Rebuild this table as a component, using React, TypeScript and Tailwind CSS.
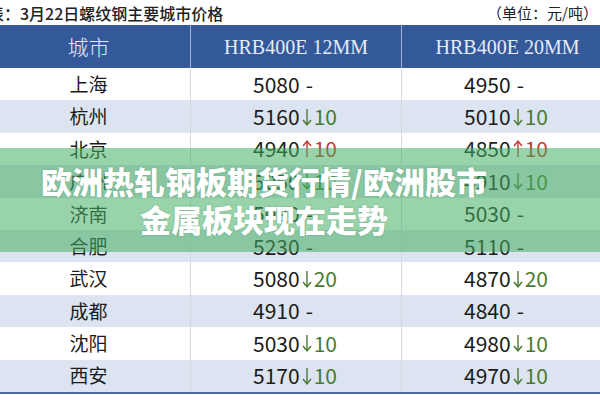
import React from "react";

type Chg = { dir: "up" | "down" | "none"; v?: string };
type Row = { city: string; a: string; ac: Chg; b: string; bc: Chg };

const rows: Row[] = [
  { city: "上海", a: "5080", ac: { dir: "none" }, b: "4950", bc: { dir: "none" } },
  { city: "杭州", a: "5160", ac: { dir: "down", v: "10" }, b: "5010", bc: { dir: "down", v: "10" } },
  { city: "北京", a: "4940", ac: { dir: "up", v: "10" }, b: "4850", bc: { dir: "up", v: "10" } },
  { city: "广州", a: "5050", ac: { dir: "down", v: "10" }, b: "4910", bc: { dir: "down", v: "10" } },
  { city: "济南", a: "5090", ac: { dir: "none" }, b: "5030", bc: { dir: "none" } },
  { city: "合肥", a: "5230", ac: { dir: "none" }, b: "5110", bc: { dir: "none" } },
  { city: "武汉", a: "5080", ac: { dir: "down", v: "20" }, b: "4870", bc: { dir: "down", v: "20" } },
  { city: "成都", a: "4910", ac: { dir: "none" }, b: "4840", bc: { dir: "none" } },
  { city: "沈阳", a: "5030", ac: { dir: "down", v: "10" }, b: "4980", bc: { dir: "down", v: "10" } },
  { city: "西安", a: "5170", ac: { dir: "down", v: "10" }, b: "4970", bc: { dir: "down", v: "10" } },
];

const cjk = { fontFamily: '"Noto Sans CJK SC", "Noto Sans", sans-serif' };
const serif = { fontFamily: '"Liberation Serif", "Noto Sans CJK SC", serif' };

function Arrow({ up, color }: { up: boolean; color: string }) {
  return (
    <svg width="10" height="18" viewBox="0 0 10 18" className="mx-[2px]" style={{ transform: up ? "rotate(180deg)" : undefined }}>
      <path d="M5 1 V16.5" stroke={color} strokeWidth="1.4" fill="none" />
      <path d="M1 12 L5 16.8 L9 12" stroke={color} strokeWidth="1.4" fill="none" />
    </svg>
  );
}

function Val({ n, c }: { n: string; c: Chg }) {
  const color = c.dir === "up" ? "#c43a34" : "#4a7a32";
  return (
    <div className="flex items-center pl-[62px] text-[21px] text-[#1b1b1b] leading-none" style={cjk}>
      <span>{n}</span>
      {c.dir === "none" ? (
        <span className="ml-[6px]">-</span>
      ) : (
        <>
          <Arrow up={c.dir === "up"} color={color} />
          <span style={{ color }}>{c.v}</span>
        </>
      )}
    </div>
  );
}

export default function App() {
  return (
    <div className="relative w-[600px] h-[400px] overflow-hidden bg-white">
      <div className="flex h-[25px] items-center justify-between text-[#222]" style={cjk}>
        <span className="ml-[-12px] text-[16px] font-medium leading-none">表：3月22日螺纹钢主要城市价格</span>
        <span className="mr-[2px] text-[15px] leading-none">（单位：元/吨）</span>
      </div>
      <div className="ml-[-13px] w-[626px]">
        <div className="grid h-[43px] grid-cols-[204px_211px_211px] bg-[#33599a] text-[#e4ebf5]">
          <div className="flex items-center justify-center border-r border-[#9fb3d4] text-[21px] font-light" style={cjk}>
            城市
          </div>
          <div className="flex items-center justify-center border-r border-[#9fb3d4] text-[20px]" style={serif}>
            HRB400E 12MM
          </div>
          <div className="flex items-center justify-center text-[20px]" style={serif}>
            HRB400E 20MM
          </div>
        </div>
        {rows.map((r, i) => (
          <div
            key={r.city}
            className={`grid h-[32.4px] grid-cols-[204px_211px_211px] ${i % 2 === 1 ? "bg-[#dbe4f0]" : "bg-white"}`}
          >
            <div className="flex items-center justify-center border-r border-[#d3d9e2] text-[19px] text-[#1b1b1b]" style={cjk}>
              {r.city}
            </div>
            <div className="flex items-center border-r border-[#d3d9e2]">
              <Val n={r.a} c={r.ac} />
            </div>
            <div className="flex items-center">
              <Val n={r.b} c={r.bc} />
            </div>
          </div>
        ))}
        <div className="h-[2px] bg-[#4a6a9c]" />
      </div>
      <div
        className="absolute left-0 top-[148px] flex h-[104px] w-[600px] flex-col items-center justify-center bg-[rgba(70,175,100,0.55)] pr-[72px] text-[31px] font-black leading-[38px] text-white"
        style={{ ...cjk, textShadow: "0 0 2px rgba(0,60,20,0.25)" }}
      >
        <span>欧洲热轧钢板期货行情/欧洲股市</span>
        <span>金属板块现在走势</span>
      </div>
    </div>
  );
}
